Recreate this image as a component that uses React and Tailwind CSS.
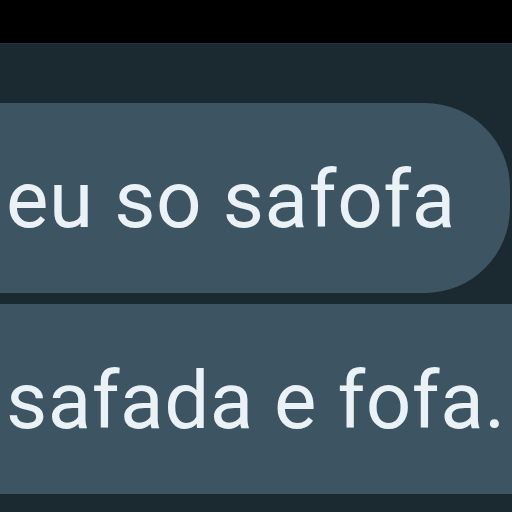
export default function App() {
  return (
    <div className="w-[512px] h-[512px] overflow-hidden bg-[#1b2a31] flex flex-col" style={{ fontFamily: 'Roboto, "Noto Sans", sans-serif' }}>
      <div className="h-[44px] bg-black shrink-0 border-b border-[#2a3438]" />
      <div className="mt-[59px] ml-[-40px] w-[550px] h-[190px] shrink-0 bg-[#3d5462] rounded-r-[85px] rounded-l-[30px] flex items-center pl-[46px] pt-[3px]">
        <span className="text-[80px] leading-none text-[#eaf2f5] tracking-[0.6px]">eu so safofa</span>
      </div>
      <div className="mt-[11px] ml-[-40px] w-[600px] h-[190px] shrink-0 bg-[#3d5462] rounded-[30px] flex items-center pl-[46px] pt-[4px]">
        <span className="text-[80px] leading-none text-[#eaf2f5] tracking-[0.5px]">safada e fofa.</span>
      </div>
    </div>
  );
}
